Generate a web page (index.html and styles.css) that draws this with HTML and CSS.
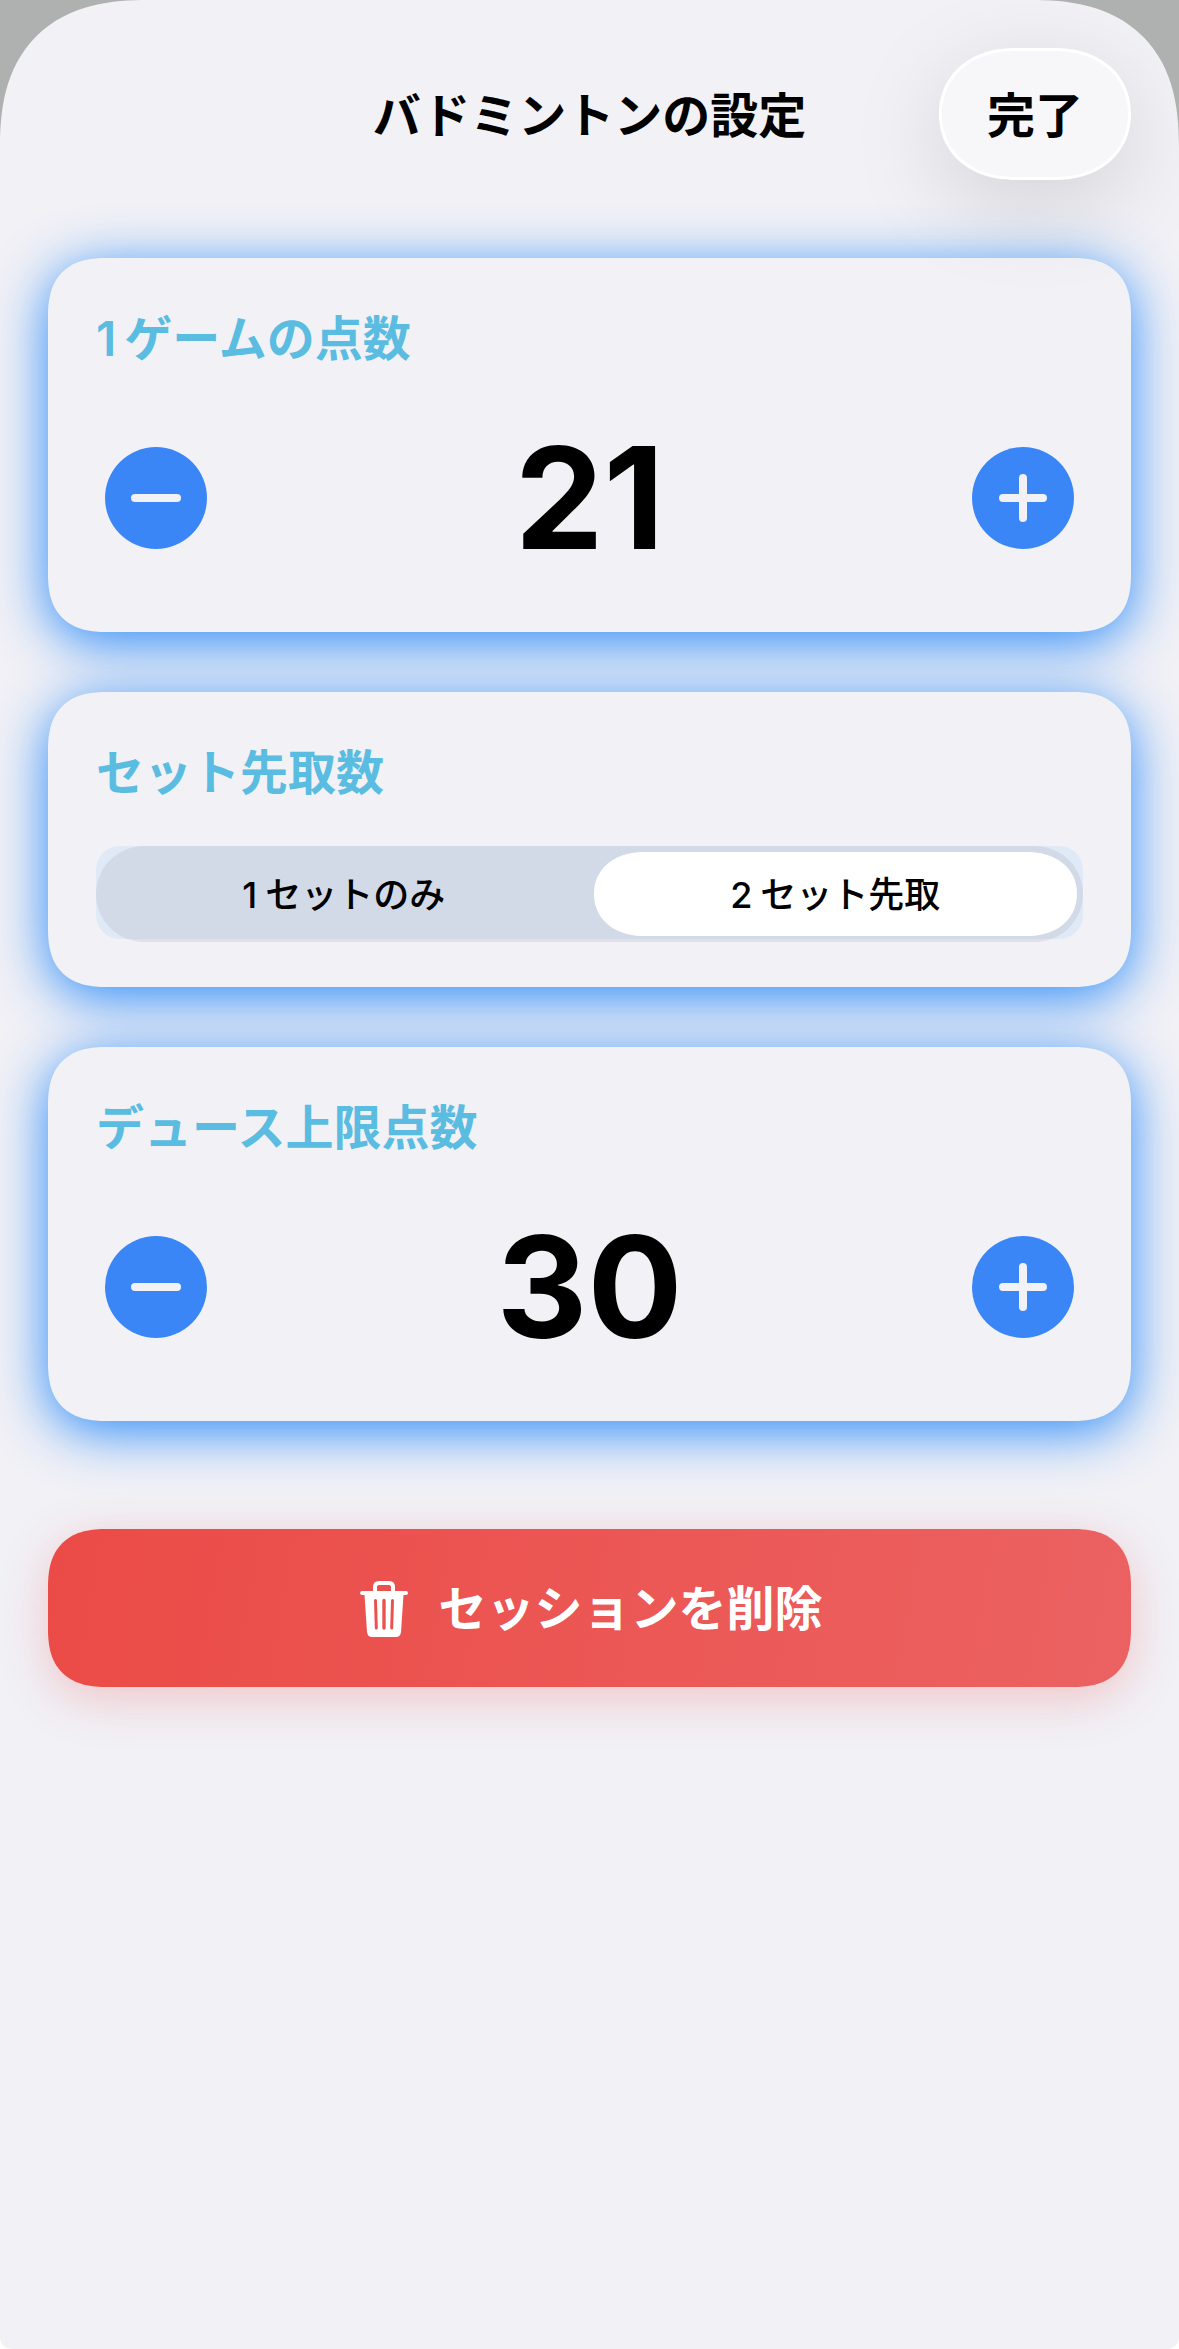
FILE: index.html
```html
<!DOCTYPE html>
<html lang="ja">
<head>
  <meta charset="utf-8">
  <meta name="viewport" content="width=device-width, initial-scale=1">
  <title>バドミントンの設定</title>
  <link rel="stylesheet" href="styles.css">
</head>
<body>
  <main class="sheet">
    <header class="header">
      <h1 class="header-title">バドミントンの設定</h1>
      <button class="done" type="button">完了</button>
    </header>

    <div class="cards">
      <section class="card">
        <h2 class="card-title" id="points-title"><span class="digit">1</span>ゲームの点数</h2>
        <div class="stepper">
          <button class="step" type="button" aria-label="減らす">
            <svg viewBox="0 0 102 102" aria-hidden="true"><path d="M30 51H72"/></svg>
          </button>
          <output class="value" aria-labelledby="points-title">21</output>
          <button class="step" type="button" aria-label="増やす">
            <svg viewBox="0 0 102 102" aria-hidden="true"><path d="M31 51H71M51 31V71"/></svg>
          </button>
        </div>
      </section>

      <section class="card">
        <h2 class="card-title" id="sets-title">セット先取数</h2>
        <div class="segments" role="radiogroup" aria-labelledby="sets-title">
          <input class="segment-input" type="radio" name="sets" id="sets-1">
          <label class="segment" for="sets-1"><span class="digit">1</span>セットのみ</label>
          <input class="segment-input" type="radio" name="sets" id="sets-2" checked>
          <label class="segment" for="sets-2"><span class="digit">2</span>セット先取</label>
        </div>
      </section>

      <section class="card">
        <h2 class="card-title" id="deuce-title">デュース上限点数</h2>
        <div class="stepper">
          <button class="step" type="button" aria-label="減らす">
            <svg viewBox="0 0 102 102" aria-hidden="true"><path d="M30 51H72"/></svg>
          </button>
          <output class="value" aria-labelledby="deuce-title">30</output>
          <button class="step" type="button" aria-label="増やす">
            <svg viewBox="0 0 102 102" aria-hidden="true"><path d="M31 51H71M51 31V71"/></svg>
          </button>
        </div>
      </section>
    </div>

    <button class="delete" type="button">
      <svg class="trash" viewBox="0 0 48 56" aria-hidden="true">
        <path class="trash-handle" d="M15 11V6Q15 2 19 2H29Q33 2 33 6V11"/>
        <path class="trash-body" fill-rule="evenodd" d="M2 10H46A2 2 0 0 1 46 14H43.500L41 51Q40.500 56 36 56H12Q7.500 56 7 51L4.500 14H2A2 2 0 0 1 2 10ZM14 19.500L14.800 47A1.500 1.500 0 0 0 17.800 47L17 19.500A1.500 1.500 0 0 0 14 19.500ZM22.300 19.500V47A1.700 1.700 0 0 0 25.700 47V19.500A1.700 1.700 0 0 0 22.300 19.500ZM31 19.500L30.200 47A1.500 1.500 0 0 0 33.200 47L34 19.500A1.500 1.500 0 0 0 31 19.500Z"/>
      </svg>
      <span>セッションを削除</span>
    </button>
  </main>
</body>
</html>
```
FILE: styles.css
```css
:root {
  --surface: #f1f1f6;
  --blue: #3b86f7;
  --cyan: #5bbce1;
}

* {
  box-sizing: border-box;
}

body {
  margin: 0;
  background: linear-gradient(#aeb1b0 160px, #fff 320px);
  color: #000;
  font-family: Inter, "Noto Sans CJK JP", sans-serif;
}

button {
  border: 0;
  padding: 0;
  color: inherit;
  font: inherit;
  cursor: pointer;
}

.sheet {
  display: flex;
  flex-direction: column;
  min-height: 100vh;
  padding: 48px;
  overflow: hidden;
  background: var(--surface);
  border-radius: 124px 124px 12px 12px;
}

/* Header: title centred on the sheet, button at the right */
.header {
  position: relative;
  z-index: 1;
  display: grid;
  grid-template-columns: 1fr auto 1fr;
  align-items: center;
  margin-bottom: 78px;
}

.header-title {
  grid-column: 2;
  margin: 0;
  padding-top: 4px;
  font-size: 48px;
  font-weight: 600;
  line-height: 66px;
}

.done {
  justify-self: end;
  height: 132px;
  padding: 4px 45px 0;
  border: 3px solid #fff;
  border-radius: 66px;
  background: #f7f7f9;
  box-shadow: 0 24px 96px rgba(0, 0, 0, 0.13);
  font-size: 48px;
  font-weight: 600;
  line-height: 66px;
}

/* Cards */
.cards {
  display: flex;
  flex-direction: column;
  gap: 60px;
}

.card {
  display: flex;
  flex-direction: column;
  gap: 40px;
  padding: 48px;
  border-radius: 48px;
  background: var(--surface);
  box-shadow: 0 10px 54px rgba(0, 118, 250, 0.84);
}

.card-title {
  margin: 0;
  color: var(--cyan);
  font-size: 48px;
  font-weight: 600;
  line-height: 66px;
}

/* Space between a leading numeral and the kana after it */
.digit {
  margin-right: 8px;
}

.stepper {
  display: flex;
  align-items: center;
  justify-content: space-between;
  padding: 0 9px;
}

.step {
  width: 102px;
  height: 102px;
  border-radius: 50%;
  background: var(--blue);
}

.step svg {
  display: block;
  width: 100%;
  fill: none;
  stroke: var(--surface);
  stroke-width: 8;
  stroke-linecap: round;
}

.value {
  font-size: 141px;
  font-weight: 700;
  line-height: 172px;
}

/* Segmented control */
.segments {
  position: relative;
  display: grid;
  grid-template-columns: 1fr 1fr;
  column-gap: 8px;
  padding: 6px 6px 3px;
  border-radius: 24px;
  background: #dfeaf6;
}

.segments::before {
  content: "";
  position: absolute;
  inset: 0 0 -3px;
  border-radius: 48px;
  background: rgba(124, 114, 138, 0.13);
}

.segment {
  position: relative;
  height: 84px;
  border-radius: 42px;
  font-size: 36px;
  font-weight: 500;
  line-height: 86px;
  text-align: center;
  cursor: pointer;
}

.segment-input {
  position: absolute;
  opacity: 0;
}

.segment-input:checked + .segment {
  background: #fff;
}

/* Delete button */
.delete {
  display: flex;
  align-items: center;
  justify-content: center;
  gap: 30px;
  height: 158px;
  margin-top: 108px;
  padding: 2px 0 0 4px;
  border-radius: 48px;
  background: linear-gradient(100deg, #eb4b46, #eb6262);
  box-shadow: 0 12px 48px rgba(235, 75, 70, 0.26);
  color: #fff;
  font-size: 48px;
  font-weight: 600;
  line-height: 66px;
}

.trash {
  width: 48px;
  height: 56px;
}

.trash-handle {
  fill: none;
  stroke: #fff;
  stroke-width: 4;
}

.trash-body {
  fill: #fff;
}

/* Continuous-curvature corners where the browser can draw them */
@supports (corner-shape: superellipse(1.3)) {
  .sheet,
  .card,
  .delete {
    corner-shape: superellipse(1.3);
  }

  .sheet {
    border-radius: 148px 148px 14px 14px;
  }

  .card,
  .delete {
    border-radius: 58px;
  }

  .done,
  .segment {
    corner-shape: superellipse(1.1);
  }

  .done {
    border-radius: 76px / 66px;
  }

  .segment {
    border-radius: 50px / 42px;
  }
}
```
